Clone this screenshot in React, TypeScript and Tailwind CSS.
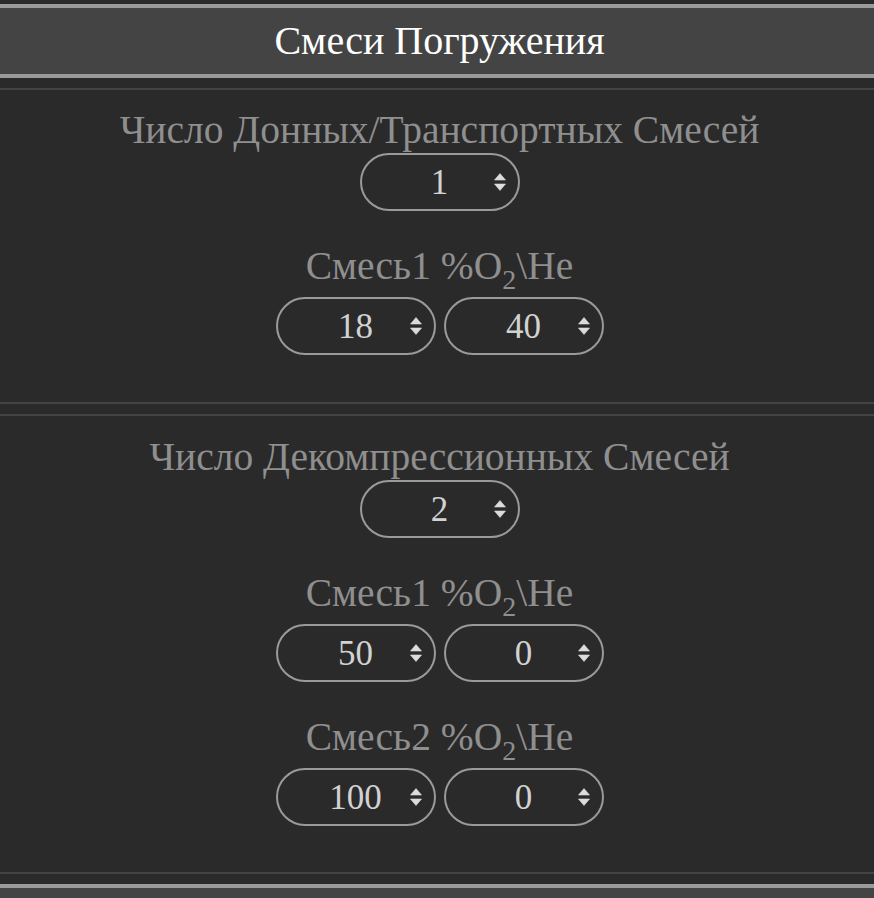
import React from "react";

const serif = { fontFamily: '"Liberation Serif", "Times New Roman", serif' };

function Arrows() {
  return (
    <svg width="12" height="20" viewBox="0 0 12 20" className="absolute right-[12px] top-1/2 -translate-y-1/2">
      <path d="M6 1.5 L11.5 8 L0.5 8 Z" fill="#dcdcdc" stroke="#dcdcdc" strokeWidth="0.6" strokeLinejoin="round" />
      <path d="M6 18.5 L11.5 12 L0.5 12 Z" fill="#dcdcdc" stroke="#dcdcdc" strokeWidth="0.6" strokeLinejoin="round" />
    </svg>
  );
}

function Sel({ value }: { value: string }) {
  return (
    <div className="relative w-[160px] h-[58px] rounded-full border-2 border-[#9a9a9a] flex items-center justify-center text-[35px] text-[#d2d2d2] leading-none">
      <span>{value}</span>
      <Arrows />
    </div>
  );
}

function CountGroup({ label, value }: { label: string; value: string }) {
  return (
    <div className="flex flex-col items-center">
      <div className="h-[44px] leading-[44px] text-[39.5px] text-[#8f8f8f] whitespace-nowrap">{label}</div>
      <div className="mt-[1px]">
        <Sel value={value} />
      </div>
    </div>
  );
}

function MixGroup({ n, o2, he }: { n: string; o2: string; he: string }) {
  return (
    <div className="flex flex-col items-center mt-[33px]">
      <div className="h-[44px] leading-[44px] text-[39.5px] text-[#8f8f8f] whitespace-nowrap">
        Смесь{n} %O<span className="relative top-[10px] text-[28px]">2</span>\He
      </div>
      <div className="mt-[9px] flex gap-[8px]">
        <Sel value={o2} />
        <Sel value={he} />
      </div>
    </div>
  );
}

export default function App() {
  return (
    <div className="min-h-[898px] bg-[#2a2a2a] pt-[4px] flex flex-col" style={serif}>
      <div className="h-[74px] pl-[5px] border-y-4 border-[#9a9a9a] bg-[#444444] flex items-center justify-center">
        <div className="text-[40px] text-white leading-none">Смеси Погружения</div>
      </div>
      <div className="mt-[10px] pl-[5px] border-y-2 border-[#444444] pt-[18px] pb-[47px]">
        <CountGroup label="Число Донных/Транспортных Смесей" value="1" />
        <MixGroup n="1" o2="18" he="40" />
      </div>
      <div className="mt-[10px] pl-[5px] border-y-2 border-[#444444] pt-[19px] pb-[46px]">
        <CountGroup label="Число Декомпрессионных Смесей" value="2" />
        <MixGroup n="1" o2="50" he="0" />
        <MixGroup n="2" o2="100" he="0" />
      </div>
      <div className="mt-[10px] flex-1 border-t-4 border-[#9a9a9a] bg-[#444444]" />
    </div>
  );
}
